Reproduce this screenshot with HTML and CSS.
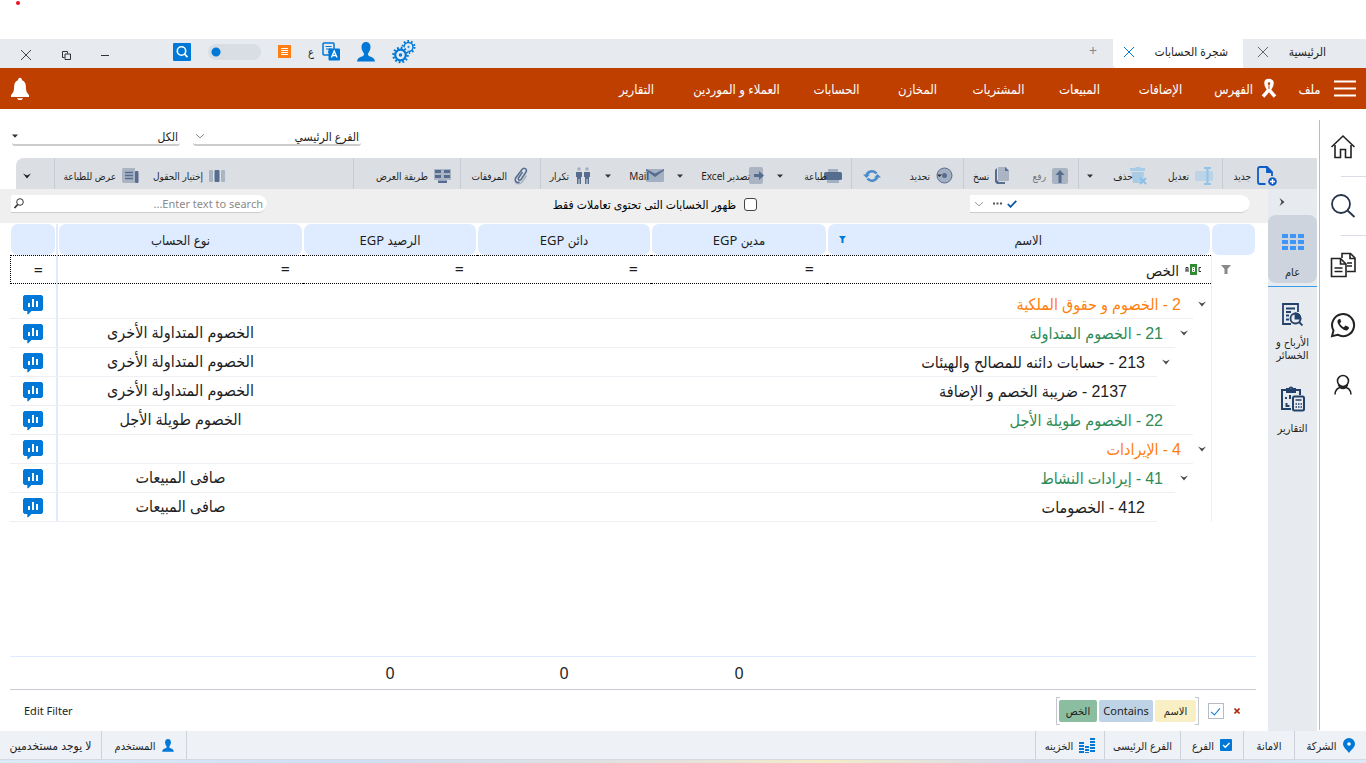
FILE: index.html
```html
<!DOCTYPE html>
<html lang="ar" dir="rtl">
<head>
<meta charset="utf-8">
<title>شجرة الحسابات</title>
<link rel="stylesheet" href="styles.css">
</head>
<body>
<svg class="sprite" aria-hidden="true">
  <symbol id="chevron" viewBox="0 0 10 6"><path d="M1 1.2 5 4.8 9 1.2" fill="none" stroke="currentColor" stroke-width="1"/></symbol>
  <symbol id="expand" viewBox="0 0 8 6"><path d="M0 0.5 4 5.5 8 0.5 4 2.500Z" fill="currentColor"/></symbol>
  <symbol id="caret" viewBox="0 0 6 4"><path d="M0 0.5H6L3 3.8Z" fill="currentColor"/></symbol>
  <symbol id="cross" viewBox="0 0 12 12"><path d="M1 1 11 11M11 1 1 11" fill="none" stroke="currentColor" stroke-width="1"/></symbol>
  <symbol id="person" viewBox="0 0 18 20"><path d="M9 0C6 0 4.500 2 4.500 5c0 3 1.200 4.500 2.300 6.300.5 1 .3 2-.8 2.600C3.500 15 .5 15.500 0 19.500H18C17.500 15.500 14.500 15 12 13.900c-1.100-.6-1.300-1.600-.8-2.600C12.300 9.500 13.500 8 13.500 5 13.500 2 12 0 9 0Z" fill="#0078d7"/></symbol>
  <symbol id="chart" viewBox="0 0 20 20"><path d="M1.500 0h17L20 1.500v13L18.500 16H8.500L5 19.500 4.300 19V16H1.500L0 14.500v-13Z" fill="#0078d7"/><path d="M5 8h2v4H5ZM9 4h2v8H9ZM13 6h2v6h-2Z" fill="#fff"/></symbol>
</svg>

<div class="recording"><span class="rec-dot"></span></div>

<header class="titlebar">
  <div class="tab tab-home"><span>الرئيسية</span><button aria-label="إغلاق الرئيسية"><svg width="12" height="12"><use href="#cross"/></svg></button></div>
  <div class="tab tab-active"><span>شجرة الحسابات</span><button aria-label="إغلاق شجرة الحسابات"><svg width="12" height="12"><use href="#cross"/></svg></button></div>
  <button class="tab-add" aria-label="علامة تبويب جديدة">+</button>
  <div class="quick">
    <button aria-label="الإعدادات"><svg width="24" height="24" viewBox="0 0 24 24" fill="none" stroke="#0078d7"><circle cx="16.500" cy="7" r="4.500" stroke-width="1.500"/><circle cx="16.500" cy="7" r="6" stroke-width="2" stroke-dasharray="1.700 2.070"/><circle cx="16.500" cy="7" r=".7"/><circle cx="8.500" cy="15" r="8.500" fill="#e7eaef" stroke="none"/><circle cx="8.500" cy="15" r="5.300" stroke-width="2.200"/><circle cx="8.500" cy="15" r="7.200" stroke-width="2.200" stroke-dasharray="1.800 1.970"/><circle cx="8.500" cy="15" r="1" stroke-width="1.500"/></svg></button>
    <button aria-label="المستخدم"><svg width="18" height="20"><use href="#person"/></svg></button>
    <button class="language" aria-label="اللغة"><svg width="18" height="19" viewBox="0 0 18 19"><rect x="1" y="1" width="11" height="12" rx="1" fill="none" stroke="#0078d7" stroke-width="1.500"/><path d="M3.500 4.500h6M4 7h5v3M6 10.500 9 8" fill="none" stroke="#0078d7" stroke-width="1.200"/><rect x="6.500" y="6.500" width="11.500" height="12" rx="1" fill="#0078d7"/><path d="M9.500 15.500 12.200 9 15 15.500M10.500 13.500h3.500" fill="none" stroke="#fff" stroke-width="1.300"/></svg><span>ع</span></button>
    <button aria-label="القائمة"><svg width="13" height="13" viewBox="0 0 13 13"><path d="M0 0h13v13H0Z" fill="#ff7f17"/><path d="M3 3.500h7M3 5.500h7M3 7.500h7M3 9.500h7" stroke="#fff"/></svg></button>
    <input class="toggle" type="checkbox" role="switch" aria-label="الوضع">
    <button aria-label="بحث"><svg width="18" height="18" viewBox="0 0 18 18"><rect width="18" height="18" rx="1" fill="#0078d7"/><circle cx="8.500" cy="8" r="4.200" fill="none" stroke="#fff" stroke-width="1.600"/><path d="m11.500 11 3 3.200" stroke="#fff" stroke-width="1.800"/></svg></button>
  </div>
  <div class="window-controls">
    <button aria-label="تصغير"><svg width="8" height="12"><path d="M0 6.500h8" stroke="#333"/></svg></button>
    <button aria-label="استعادة"><svg width="9" height="9" viewBox="0 0 9 9" fill="none" stroke="#333"><path d="M2.500 6.500h-2v-6h5v2"/><path d="M3 3h5.500v5.500H3Z"/></svg></button>
    <button aria-label="إغلاق"><svg width="12" height="12"><use href="#cross"/></svg></button>
  </div>
</header>

<nav class="menu">
  <button class="burger" aria-label="القائمة"><svg width="22" height="17" viewBox="0 0 22 17"><path d="M0 1.500h22M0 8.500h22M0 15.500h22" stroke="#fff" stroke-width="2"/></svg></button>
  <a class="item-file" href="#">ملف</a>
  <a class="item-index" href="#"><svg width="16" height="21" viewBox="0 0 16 21"><path d="M5 5C5 3.500 6 2.600 8 2.600S11 3.500 11 5c0 4-3 6.500-9 13.500M5 5c0 4 3 6.500 9 13.500" fill="none" stroke="#fff" stroke-width="3.500"/><path d="M8 8v3" stroke="#be3f00"/></svg>الفهرس</a>
  <a href="#">الإضافات</a>
  <a href="#">المبيعات</a>
  <a href="#">المشتريات</a>
  <a href="#">المخازن</a>
  <a href="#">الحسابات</a>
  <a class="item-wide" href="#">العملاء و الموردين</a>
  <a href="#">التقارير</a>
  <button class="bell" aria-label="التنبيهات"><svg width="20" height="24" viewBox="0 0 20 24" fill="#fff"><circle cx="10" cy="2.500" r="1.800"/><path d="M10 3C6.500 3 4.500 5 4.200 8.500 4 14 3.500 15.500 1 18v2h18v-2c-2.500-2.500-3-4-3.200-9.500C15.500 5 13.500 3 10 3ZM7 21.200h6c-.5 1.300-1.500 1.900-3 1.900s-2.500-.6-3-1.900Z"/></svg></button>
</nav>

<div class="workspace">
  <aside class="rail">
    <button aria-label="الرئيسية"><svg width="26" height="26" viewBox="0 0 26 26" fill="none" stroke="#222" stroke-width="1.600"><path d="m1.500 13 11.500-11 11.500 11"/><path d="M5 11v12.500h5.500v-8h5v8H21V11"/></svg></button>
    <hr>
    <button aria-label="بحث"><svg width="26" height="26" viewBox="0 0 26 26" fill="none" stroke="#28344a" stroke-width="1.800"><circle cx="11" cy="11" r="9"/><path d="m17.500 17.500 7 6.500"/></svg></button>
    <hr>
    <button aria-label="نسخ"><svg width="26" height="26" viewBox="0 0 26 26" fill="none" stroke="#222" stroke-width="1.600"><path d="M12 6V1.500h8.500L25 6v13.500h-8"/><path d="M20 1.500V6.500h5M17 11h5M17 14h5"/><path d="M1.500 6.500h9l5.500 5.500v12.500H1.500Z"/><path d="M10.500 6.500V12H16M4.500 16h8M4.500 19.500h8"/></svg></button>
    <button aria-label="واتساب"><svg width="26" height="26" viewBox="0 0 26 26"><path d="M2 24.200 3.500 18.500a11 11 0 1 1 4.200 4.200Z" fill="none" stroke="#222" stroke-width="2"/><path d="M9 7 7.500 8.500c-.8 4 5.500 10.500 9.500 10l2-2-.3-1.500-3.200-1.500-1.700 1.700c-2-1-3.200-2.200-4-4l1.500-1.500L10.200 7Z" fill="#222"/></svg></button>
    <button aria-label="الحساب"><svg width="26" height="26" viewBox="0 0 26 26" fill="none" stroke="#222" stroke-width="1.600"><circle cx="13" cy="9" r="5.500"/><path d="M5 22.500c.3-4.500 3-7.500 8-7.500s7.700 3 8 7.500M8.500 12.500c1 3 3 4 4.500 4s3.500-1 4.500-4"/></svg></button>
  </aside>

  <div class="page">
    <div class="filters">
      <label class="pick"><select aria-label="الفرع"><option>الفرع الرئيسي</option></select><svg width="10" height="6"><use href="#chevron"/></svg></label>
      <label class="pick pick-dark"><select aria-label="النطاق"><option>الكل</option></select><svg width="6" height="4"><use href="#caret"/></svg></label>
    </div>

    <div class="toolbar">
      <div class="group g-new"><button><svg width="20" height="20" viewBox="0 0 20 20" fill="none" stroke="#0b5cc8" stroke-width="1.800"><path d="M8.500 18H3Q1 18 1 16V3q0-2 2-2h7l5 5v4"/><path d="M10 1v5h5" fill="#0b5cc8"/><circle cx="15.500" cy="15.500" r="4.300" fill="#0b5cc8" stroke="none"/><path d="M13 15.500h5M15.500 13v5" stroke="#fff" stroke-width="1.500"/></svg><span>جديد</span></button></div>
      <div class="group g-edit">
        <button><svg width="18" height="18" viewBox="0 0 18 18"><rect x="0" y="4" width="18" height="10" rx="1" fill="#bdd3e6"/><path d="M9 1h7M9 17h7M12.500 1v16" stroke="#92c3e8" stroke-width="2.200"/></svg><span>تعديل</span></button>
        <button class="tight"><svg width="18" height="18" viewBox="0 0 18 18"><path d="M0 1h5l1-1h4l1 1h4v3H0ZM1.500 5H14l-1 11H3Z" fill="#a9cbe6"/><path d="m10 11 6 6M16 11l-6 6" stroke="#8bbfe8" stroke-width="2"/></svg><span>حذف</span></button>
        <button class="drop" aria-label="خيارات الحذف"><svg width="6" height="4"><use href="#caret"/></svg></button>
      </div>
      <div class="group g-copy">
        <button class="muted"><svg width="16" height="16" viewBox="0 0 16 16"><rect width="16" height="16" rx="2" fill="#aab4c3"/><path d="M8 2 12.500 7H9.500v8h-3V7h-3Z" fill="#566d90"/></svg><span>رفع</span></button>
        <button><svg width="15" height="17" viewBox="0 0 15 17"><path d="M0 3 2 1v12l2 2h6v2H2l-2-2Z" fill="#566d90"/><path d="M3 0h8l3 4v9q0 1-1 1H4q-1 0-1-1Z" fill="#aab4c3"/><path d="M10 0v4h4Z" fill="#566d90"/></svg><span>نسخ</span></button>
      </div>
      <div class="group g-select">
        <button><svg width="17" height="17" viewBox="0 0 17 17"><circle cx="8.500" cy="8.500" r="7.500" fill="#a3b0c2" stroke="#566d90"/><circle cx="8.500" cy="8.500" r="2.500" fill="#566d90"/><path d="M1 7.500h5L3.500 10Z" fill="#333"/></svg><span>تحديد</span></button>
        <button aria-label="تحديث"><svg width="18" height="14" viewBox="0 0 18 14" fill="none" stroke="#4a8cc8" stroke-width="2.500"><path d="M3.500 7a5.500 5 0 0 1 10-2.500M14.500 7a5.500 5 0 0 1-10 2.500"/><path d="M0 5.500h7L3.500 9ZM18 8.500h-7L14.500 5Z" fill="#4a8cc8" stroke="none"/></svg></button>
      </div>
      <div class="group g-print">
        <button class="tight"><svg width="18" height="16" viewBox="0 0 18 16"><path d="M4 1h10v3H4ZM3 10h12v5H3Z" fill="#a3b0c2"/><rect y="4" width="18" height="8" rx="1.500" fill="#566d90"/></svg><span>طباعة</span></button>
        <button class="drop" aria-label="خيارات الطباعة"><svg width="6" height="4"><use href="#caret"/></svg></button>
      </div>
      <div class="group joined g-export">
        <button class="tight"><svg width="18" height="18" viewBox="0 0 18 18"><rect x="2" width="14" height="17" rx="2" fill="#aab4c3"/><path d="M7 7h5V4l5 4.500L12 13v-3H7Z" fill="#566d90"/></svg><span>تصدير Excel</span></button>
        <button class="drop" aria-label="خيارات التصدير"><svg width="6" height="4"><use href="#caret"/></svg></button>
      </div>
      <div class="group joined g-mail">
        <button class="tight"><svg width="18" height="13" viewBox="0 0 18 13"><rect width="18" height="13" rx="1.500" fill="#a3b0c2"/><path d="M0 1.500 9 8l9-6.500V0L9 4.500 0 0Z" fill="#566d90"/></svg><span>Mail</span></button>
        <button class="drop" aria-label="خيارات البريد"><svg width="6" height="4"><use href="#caret"/></svg></button>
      </div>
      <div class="group joined g-repeat"><button><svg width="16" height="17" viewBox="0 0 16 17"><circle cx="4" cy="2" r="1.800" fill="#a3b0c2"/><circle cx="12" cy="2" r="1.800" fill="#a3b0c2"/><path d="M1 5h6v5H6v7H4.500v-5h-1v5H2v-7H1ZM9 5h6v5h-1v7h-1.500v-5h-1v5H10v-7H9Z" fill="#566d90"/></svg><span>تكرار</span></button></div>
      <div class="group g-attach"><button><svg width="15" height="18" viewBox="0 0 15 18" fill="none"><path d="M2 14.500c1.500 3 5 3 7 .5l4.500-6.500" stroke="#aab4c3" stroke-width="1.600"/><path d="M9.500 5 5.500 11c-1 2 1.500 3 2.500 1.500l5-7.500c1.500-3-2-5-4-2.500L3 10.500C1 13.500 3.500 16.500 6.500 15" stroke="#566d90" stroke-width="1.500"/></svg><span>المرفقات</span></button></div>
      <div class="group g-view"><button><svg width="17" height="14" viewBox="0 0 17 14"><path d="M0 0h17v11H0Z" fill="#aab4c3"/><path d="M1 1h6v3H1ZM10 1h6v3h-6ZM1 6h6v3H1ZM10 6h6v3h-6ZM4 11.500h9V14H4Z" fill="#566d90"/></svg><span>طريقة العرض</span></button></div>
      <div class="group g-fields">
        <button><svg width="16" height="12" viewBox="0 0 16 12"><rect width="4" height="12" rx="1" fill="#aab4c3"/><rect x="5.500" width="5" height="12" rx="1" fill="#566d90"/><rect x="12" width="4" height="12" rx="1" fill="#aab4c3"/></svg><span>إختيار الحقول</span></button>
        <button><svg width="17" height="16" viewBox="0 0 17 16"><path d="M0 1.500Q0 0 1.500 0H13v15H2q-2 0-2-2Z" fill="#aab4c3"/><path d="M3 4.500h8M3 7.500h8M3 10.500h8" stroke="#566d90" stroke-width="1.500"/><rect x="13" y="3" width="3.500" height="12" rx="1" fill="#566d90"/></svg><span>عرض للطباعة</span></button>
      </div>
      <div class="group g-more"><button aria-label="المزيد"><svg width="8" height="6"><use href="#expand"/></svg></button></div>
    </div>

    <div class="body">
      <aside class="panel">
        <button class="collapse" aria-label="طي"><svg width="6" height="8" viewBox="0 0 6 8"><path d="M.5 0 5.500 4 .5 8 2.500 4Z" fill="#444"/></svg></button>
        <button class="view active"><svg width="22" height="17" viewBox="0 0 22 17" fill="#3f96f7"><path d="M0 0h6v4H0ZM8 0h6v4H8ZM16 0h6v4h-6ZM0 6h6v4H0ZM8 6h6v4H8ZM16 6h6v4h-6ZM0 12h6v4H0ZM8 12h6v4H8ZM16 12h6v4h-6Z"/></svg><span>عام</span></button>
        <button class="view"><svg width="21" height="23" viewBox="0 0 21 23" fill="none" stroke="#23426b" stroke-width="1.800"><path d="M16 9V1H1v20h8"/><path d="M4 5.500h9M4 9h5M4 12.500h3M4 16.500h3"/><circle cx="13.500" cy="15.500" r="5"/><path d="M17 19l3.500 3.500"/><path d="M13.500 10.500v5h5q-.5-4.500-5-5Z" fill="#23426b"/></svg><span>الأرباح و الخسائر</span></button>
        <button class="view"><svg width="24" height="26" viewBox="0 0 24 26" fill="none" stroke="#23426b" stroke-width="2"><path d="M10 23H1V4h18v5"/><path d="M6 6V3h2q2-3 4 0h2v3Z"/><path d="M5 11v2M9 9v4M5.500 17v3h3"/><rect x="12" y="10.500" width="11" height="14" rx="1.500"/><path d="M14.500 14h6M14.500 18h1.500M17 18h1.500M19.500 18H21M14.500 21h1.500M17 21h1.500M19.500 21H21" stroke-width="1.500"/></svg><span>التقارير</span></button>
      </aside>

      <main class="content">
        <div class="search-row">
          <div class="lookup"><input type="text" aria-label="الحساب"><svg width="10" height="8" viewBox="0 0 10 8"><path d="M.8 4 3.500 6.800 9.300.8" fill="none" stroke="#0b56a0" stroke-width="1.800"/></svg><svg width="9" height="3" viewBox="0 0 9 3"><path d="M0 .5h2v2H0ZM3.500.5h2v2h-2ZM7 .5h2v2H7Z" fill="#555"/></svg><svg class="pale" width="10" height="6"><use href="#chevron"/></svg></div>
          <label class="only-used"><input type="checkbox"><span>ظهور الخسابات التى تحتوى تعاملات فقط</span></label>
          <div class="search"><input type="search" placeholder="Enter text to search..." aria-label="بحث"><svg width="10" height="11" viewBox="0 0 10 11" fill="none" stroke="#333"><circle cx="6" cy="4" r="3.300"/><path d="M3.700 6.500.5 10" stroke-width="1.800"/></svg></div>
        </div>

        <table class="grid">
          <colgroup><col class="c-mark"><col><col class="c-debit"><col class="c-num"><col class="c-num"><col class="c-type"><col class="c-action"></colgroup>
          <thead>
            <tr><th><div></div></th><th><div class="th-name">الاسم<svg width="7" height="7" viewBox="0 0 7 7"><path d="M0 0h7L4.500 3v4h-2V3Z" fill="#0078d7"/></svg></div></th><th><div>مدين EGP</div></th><th><div>دائن EGP</div></th><th><div>الرصيد EGP</div></th><th><div>نوع الحساب</div></th><th><div></div></th></tr>
          </thead>
          <tbody>
            <tr class="filter-row"><td class="funnel"><svg width="10" height="9" viewBox="0 0 10 9"><path d="M0 0h10L6.500 4v5h-3V4Z" fill="#888"/></svg></td><td class="f-name"><div><svg width="17" height="11" viewBox="0 0 17 11"><rect x="5" width="7" height="11" fill="#2e8b32"/><path d="M1 8V3.500h2V8M1 6h2M16 3.500h-2v4h2" fill="none" stroke="#333"/><path d="M7.500 3.500h2v4h-2ZM7.500 5.500h2" fill="none" stroke="#fff"/></svg>الخص</div></td><td>=</td><td>=</td><td>=</td><td>=</td><td class="f-last">=</td></tr>
            <tr><td></td><td><div class="node level-1 cut-1"><svg width="8" height="6"><use href="#expand"/></svg><span><b>2</b> - الخصوم و حقوق الملكية</span></div></td><td></td><td></td><td></td><td></td><td><button aria-label="تقرير"><svg width="20" height="20"><use href="#chart"/></svg></button></td></tr>
            <tr><td></td><td><div class="node level-2 cut-2"><svg width="8" height="6"><use href="#expand"/></svg><span><b>21</b> - الخصوم المتداولة</span></div></td><td></td><td></td><td></td><td>الخصوم المتداولة الأخرى</td><td><button aria-label="تقرير"><svg width="20" height="20"><use href="#chart"/></svg></button></td></tr>
            <tr><td></td><td><div class="node level-3 cut-3"><svg width="8" height="6"><use href="#expand"/></svg><span><b>213</b> - حسابات دائنه للمصالح والهيئات</span></div></td><td></td><td></td><td></td><td>الخصوم المتداولة الأخرى</td><td><button aria-label="تقرير"><svg width="20" height="20"><use href="#chart"/></svg></button></td></tr>
            <tr><td></td><td><div class="node level-4 cut-2 leaf"><span><b>2137</b> - ضريبة الخصم و الإضافة</span></div></td><td></td><td></td><td></td><td>الخصوم المتداولة الأخرى</td><td><button aria-label="تقرير"><svg width="20" height="20"><use href="#chart"/></svg></button></td></tr>
            <tr><td></td><td><div class="node level-2 cut-1 leaf"><span><b>22</b> - الخصوم طويلة الأجل</span></div></td><td></td><td></td><td></td><td>الخصوم طويلة الأجل</td><td><button aria-label="تقرير"><svg width="20" height="20"><use href="#chart"/></svg></button></td></tr>
            <tr><td></td><td><div class="node level-1 cut-1"><svg width="8" height="6"><use href="#expand"/></svg><span><b>4</b> - الإيرادات</span></div></td><td></td><td></td><td></td><td></td><td><button aria-label="تقرير"><svg width="20" height="20"><use href="#chart"/></svg></button></td></tr>
            <tr><td></td><td><div class="node level-2 cut-2"><svg width="8" height="6"><use href="#expand"/></svg><span><b>41</b> - إيرادات النشاط</span></div></td><td></td><td></td><td></td><td>صافى المبيعات</td><td><button aria-label="تقرير"><svg width="20" height="20"><use href="#chart"/></svg></button></td></tr>
            <tr><td></td><td><div class="node level-3 cut-3 leaf"><span><b>412</b> - الخصومات</span></div></td><td></td><td></td><td></td><td>صافى المبيعات</td><td><button aria-label="تقرير"><svg width="20" height="20"><use href="#chart"/></svg></button></td></tr>
          </tbody>
        </table>

        <table class="totals">
          <colgroup><col class="c-mark"><col><col class="c-debit"><col class="c-num"><col class="c-num"><col class="c-type"><col class="c-action"></colgroup>
          <tbody><tr><td></td><td></td><td>0</td><td>0</td><td>0</td><td></td><td></td></tr></tbody>
        </table>

        <div class="filter-bar">
          <button aria-label="حذف التصفية"><svg width="6" height="6" viewBox="0 0 6 6"><path d="M.5.5l5 5M5.500.5l-5 5" stroke="#b02a12" stroke-width="1.600"/></svg></button>
          <input type="checkbox" checked aria-label="تفعيل التصفية">
          <div class="expression"><button class="field">الاسم</button><button class="operator">Contains</button><button class="value">الخص</button></div>
          <button class="edit-filter">Edit Filter</button>
        </div>
      </main>
    </div>
  </div>
</div>

<footer class="status">
  <div class="s-company"><svg width="12" height="15" viewBox="0 0 12 15"><path d="M6 0a6 6 0 0 1 6 6c0 3-3 5-6 9-3-4-6-6-6-9a6 6 0 0 1 6-6Z" fill="#0078d7"/><circle cx="6" cy="6" r="1.800" fill="#fff"/></svg><span>الشركة</span></div>
  <div class="s-name"><span>الامانة</span></div>
  <div class="s-branch"><svg width="12" height="12" viewBox="0 0 12 12"><rect width="12" height="12" rx="1" fill="#0078d7"/><path d="m3 6 2.300 2.300L9.500 4" fill="none" stroke="#fff" stroke-width="1.400"/></svg><span>الفرع</span></div>
  <div class="s-main"><span>الفرع الرئيسى</span></div>
  <div class="s-safe"><svg width="16" height="15" viewBox="0 0 16 15" fill="none" stroke="#0078d7" stroke-dasharray="2 1"><path d="M2.500 4v11" stroke-width="5"/><path d="M8 8v7" stroke-width="4"/><path d="M13.500 0v15" stroke-width="5"/></svg><span>الخزينه</span></div>
  <div class="s-fill"></div>
  <div class="s-user"><svg width="12" height="13"><use href="#person"/></svg><span>المستخدم</span></div>
  <div class="s-none"><span>لا يوجد مستخدمين</span></div>
</footer>
<div class="desktop-edge"></div>
</body>
</html>
```
FILE: styles.css
```css
* { box-sizing: border-box; }
body {
  margin: 0;
  min-height: 100vh;
  display: flex;
  flex-direction: column;
  background: #fff;
  color: #1e1e1e;
  font-family: "Noto Sans", "DejaVu Sans Condensed", "DejaVu Sans", sans-serif;
  font-size: 10px;
}
button, input, select { font: inherit; color: inherit; }
button { border: 0; padding: 0; background: none; display: flex; align-items: center; white-space: nowrap; }
svg { flex: none; display: block; }
a { color: inherit; text-decoration: none; }
.sprite { position: absolute; width: 0; height: 0; }

.recording { height: 39px; padding: 1px 16px; display: flex; justify-content: flex-end; }
.rec-dot { width: 4px; height: 4px; border-radius: 50%; background: #e81123; }

/* title bar */
.titlebar { height: 29px; display: flex; background: #e7eaef; }
.tab { display: flex; align-items: center; justify-content: space-between; font-size: 12px; padding-bottom: 4px; }
.tab button { color: #666; }
.tab-home { width: 123px; padding-right: 40px; padding-left: 14px; }
.tab-active { width: 130px; padding-right: 15px; padding-left: 10px; background: #fff; border-radius: 0 0 0 4px; }
.tab-active button { color: #0078d7; }
.tab-add { width: 40px; justify-content: center; font-size: 14px; color: #888; padding-bottom: 6px; }
.quick { margin-right: auto; display: flex; align-items: center; gap: 17px; padding-bottom: 4px; }
.language { gap: 8px; font-size: 11px; }
.toggle { appearance: none; width: 53px; height: 16px; margin: 0; border-radius: 8px; background: #d9dee5 radial-gradient(circle at 8px 8px, #0078d7 4px, transparent 5px); }
.window-controls { width: 173px; display: flex; align-items: center; justify-content: space-between; padding: 3px 64px 0 20px; color: #444; }

/* main menu */
.menu { height: 41px; display: flex; align-items: center; background: #be3f00; color: #fff; font-size: 13px; }
.menu a { width: 81px; text-align: center; white-space: nowrap; }
.burger { margin-right: 10px; }
.menu .item-file { width: 49px; }
.menu .item-index { width: 84px; display: flex; align-items: center; gap: 8px; padding-right: 8px; }
.menu .item-wide { width: 119px; }
.bell { margin-right: auto; margin-left: 10px; }

/* right rail */
.workspace { flex: 1; display: flex; }
.rail { width: 47px; margin: 11px 0 1px; padding-top: 14px; border-left: 1px solid #b8bcc6; display: flex; flex-direction: column; align-items: center; }
.rail hr { width: 25px; margin: 16px 0; border: 0; border-top: 1px solid #dadde3; align-self: flex-start; }
.rail button + button { margin-top: 34px; }

.page { flex: 1; min-width: 0; display: flex; flex-direction: column; }
.filters { height: 49px; display: flex; justify-content: flex-end; gap: 13px; padding: 19px 0 0 12px; }
.pick { width: 168px; height: 18px; display: flex; align-items: center; border-bottom: 2px solid #ccc; border-radius: 0 0 3px 3px; color: #888; padding-left: 2px; }
.pick select { appearance: none; flex: 1; border: 0; padding: 0 2px; background: none; color: #1e1e1e; font-size: 12px; }
.pick-dark { color: #333; padding-left: 0; }

/* toolbar */
.toolbar { height: 31px; margin: 0 2px 0 16px; display: flex; background: #dbdee3; border-radius: 8px 0 0 0; }
.group { flex: none; display: flex; align-items: center; justify-content: space-between; padding-top: 4px; }
.group + .group:not(.joined) { border-right: 1px solid #c6cbd5; }
.group button { gap: 6px; }
.group .tight { gap: 0; }
.group .tight span { margin-right: -3px; }
.drop { color: #333; }
.muted { color: #777; }
.g-new { width: 94px; padding-right: 40px; }
.g-edit { width: 144px; padding-right: 9px; padding-left: 8px; }
.g-copy { width: 115px; padding-right: 10px; padding-left: 9px; }
.g-select { width: 112px; padding-right: 10px; padding-left: 11px; }
.g-print { width: 82px; padding-right: 9px; padding-left: 7px; }
.g-export { width: 98px; padding-right: 5px; padding-left: 5px; }
.g-mail { width: 72px; padding-right: 8px; padding-left: 5px; }
.g-repeat { width: 59px; padding-right: 9px; }
.g-attach { width: 80px; padding-right: 12px; }
.g-view { width: 107px; padding-right: 9px; }
.toolbar .g-fields { flex: 1; padding-right: 128px; justify-content: flex-start; gap: 14px; }
.g-more { width: 39px; padding-right: 23px; }

/* side panel */
.body { flex: 1; display: flex; }
.panel { width: 49px; margin-right: 2px; background: #e7eaef; display: flex; flex-direction: column; font-size: 11px; }
.collapse { height: 26px; padding-right: 32px; }
.view { flex-direction: column; gap: 9px; padding: 16px 0 0; min-height: 84px; white-space: normal; line-height: 13px; }
.view.active { min-height: 68px; padding-top: 19px; gap: 14px; background: #cdd4dd; border-radius: 8px; margin-bottom: 3px; }
.view.active + .view { border-top: 1px solid #3a9be8; }

/* search row */
.content { flex: 1; min-width: 0; display: flex; flex-direction: column; }
.search-row { height: 34px; padding: 0 18px 4px 11px; background: #efefef; display: flex; align-items: center; }
.lookup { width: 280px; height: 18px; background: #fff; border-bottom: 1px solid #ccc; border-radius: 0 9px 9px 0; display: flex; align-items: center; gap: 5px; padding-left: 4px; }
.lookup input { flex: 1; min-width: 0; border: 0; background: none; padding: 0 8px; }
.pale { color: #999; margin-right: 4px; }
.only-used { margin-right: 213px; display: flex; align-items: center; gap: 8px; font-size: 12px; color: #000; }
.only-used input { appearance: none; width: 13px; height: 13px; margin: 0; border: 1px solid #444; border-radius: 3px; background: #fff; }
.search { margin-right: auto; width: 256px; height: 18px; background: #fff; border-bottom: 1px solid #ccc; border-radius: 0 9px 9px 0; display: flex; align-items: center; }
.search input { flex: 1; min-width: 0; border: 0; background: none; padding: 0 4px; font-size: 11px; outline: 0; }
.search input::placeholder { color: #8a8a8a; opacity: 1; }
.search svg { width: 15px; padding-left: 1px; }

/* accounts tree */
.grid, .totals { table-layout: fixed; border-spacing: 0; margin: 0 12px 0 10px; font-size: 16px; }
.grid { margin-top: 1px; }
.c-mark { width: 45px; }
.c-debit { width: 176px; }
.c-num { width: 174px; }
.c-type { width: 245px; }
.c-action { width: 48px; }
.grid th { padding: 0; font-size: 13px; font-weight: 400; }
.grid th div { height: 31px; margin: 0 1px; border-radius: 7px; background: #dfecff; display: flex; align-items: center; justify-content: center; }
.grid th .th-name { padding-left: 11px; padding-right: 168px; justify-content: space-between; }
.grid td { padding: 0 0 2px; height: 29px; text-align: center; border-bottom: 1px solid #eeeff4; white-space: nowrap; line-height: 20px; }
.grid td:first-child, .grid td:nth-child(2) { border-bottom: 0; padding-bottom: 0; }
.grid td:first-child { border-left: 1px solid #eeeff4; }
.grid td:last-child, .grid th:last-child { border-right: 2px solid #dfecff; }
.grid td:last-child { padding-bottom: 0; }
.grid td:last-child button { margin: 0 auto; padding-top: 1px; }
.grid .filter-row td:not(.funnel) { border-top: 1px dotted #000; border-bottom: 1px dotted #000; text-align: right; padding-right: 13px; }
.grid .filter-row .f-name:not(.funnel) { padding-right: 9px; }
.grid .filter-row .f-last { border-left: 1px dotted #000; }
.filter-row .funnel svg { margin-right: 25px; }
.f-name div { display: flex; align-items: center; gap: 6px; font-size: 15px; }
.filter-row + tr td { height: 35px; padding-top: 6px; }
.node { height: 29px; padding-bottom: 2px; display: flex; align-items: center; gap: 17px; color: #1e1e1e; background: linear-gradient(#eeeff4, #eeeff4) no-repeat left bottom; }
.node svg { color: #444; }
.node b { font: 400 16px "Liberation Sans", sans-serif; }
.level-1 { padding-right: 5px; color: #ff7f0e; }
.level-2 { padding-right: 23px; color: #2e8b57; }
.level-3 { padding-right: 41px; }
.level-4 { padding-right: 59px; }
.cut-1 { background-size: calc(100% - 18px) 1px; }
.cut-2 { background-size: calc(100% - 36px) 1px; }
.cut-3 { background-size: calc(100% - 54px) 1px; }
.leaf span { padding-right: 25px; }

.totals { margin-top: auto; border-top: 1px solid #dfecff; border-bottom: 1px solid #c8cbd6; }
.totals td { height: 32px; padding: 0; text-align: center; line-height: 20px; }

/* active filter */
.filter-bar { height: 41px; padding: 0 28px 0 24px; display: flex; align-items: center; font-size: 11px; }
.filter-bar > input { appearance: none; width: 16px; height: 16px; margin: 0 10px 0 9px; border: 1px solid #b4bcc8; background: #fff; position: relative; }
.filter-bar > input::after { content: ""; position: absolute; right: 5px; top: 2px; width: 4px; height: 8px; border: solid #0078d7; border-width: 0 1px 1px 0; transform: rotate(40deg); }
.expression {
  --tick: linear-gradient(#c4c7ce, #c4c7ce);
  height: 28px; padding: 3px 2px; display: flex; gap: 2px; border: solid #c4c7ce; border-width: 0 1px;
  background: var(--tick) left top / 3px 1px, var(--tick) left bottom / 3px 1px, var(--tick) right top / 3px 1px, var(--tick) right bottom / 3px 1px;
  background-repeat: no-repeat;
}
.expression button { border-radius: 2px; justify-content: center; }
.expression .field { width: 41px; background: #f8efc4; }
.expression .operator { width: 54px; background: #bed3e6; }
.expression .value { width: 38px; background: #8bbda0; }
.edit-filter { margin-right: auto; }

/* status bar */
.status { height: 29px; display: flex; background: #eef1f6; border-bottom: 1px solid #d5d8de; font-size: 11px; }
.status div { display: flex; align-items: center; justify-content: center; gap: 6px; border-left: 1px solid #cdd1d9; white-space: nowrap; }
.s-company { width: 72px; }
.s-name { width: 51px; }
.s-branch { width: 63px; }
.s-main { width: 76px; }
.s-safe { width: 69px; }
.s-fill { flex: 1; }
.s-user { width: 85px; }
.status .s-none { width: 101px; border-left: 0; font-size: 12px; }
.desktop-edge { height: 3px; background: linear-gradient(90deg, #dcebf8, #cfdff5 25%, #e4e2dc 50%, #f3ecc8 60%, #d5dcec 75%, #d8eaf8); }
```
